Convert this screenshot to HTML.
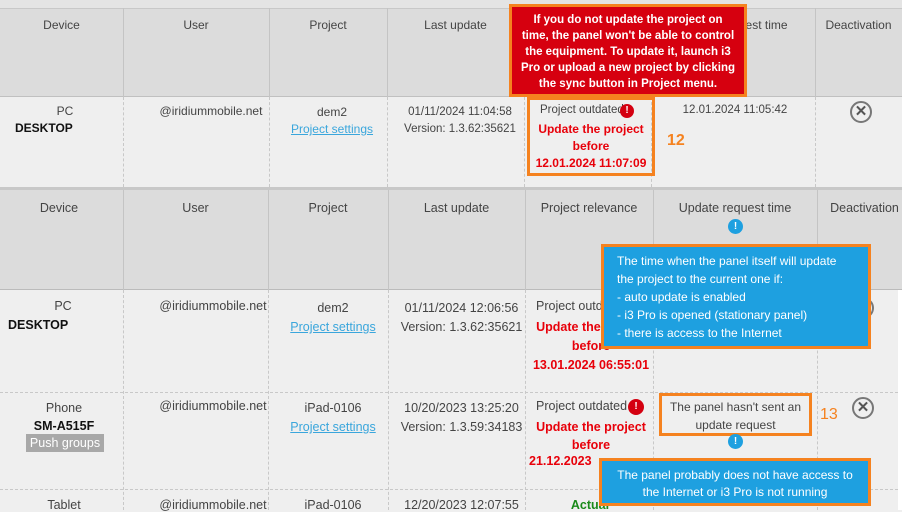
<!DOCTYPE html><html><head><style>
body{margin:0;width:902px;height:510px;overflow:hidden;background:#efefef;font-family:"Liberation Sans",sans-serif;font-size:12px;color:#444;position:relative}
div{position:absolute;box-sizing:border-box}
.h{background:#dcdcdc}
.t{text-align:center;white-space:nowrap}
.vl{width:1px;background:#c4c4c4}
.vd{width:0;border-left:1px dashed #c8c8c8}
.hd{height:0;border-top:1px dashed #c8c8c8}
.lk{color:#3aa6dc;text-decoration:underline}
.red{color:#e8000a;font-weight:bold}
.x{width:22px;height:22px;border:2px solid #777;border-radius:50%;color:#555;font-weight:bold;font-size:15px;line-height:18px;text-align:center}
.ex{width:14px;height:14px;border-radius:50%;background:#d40010;color:#fff;font-weight:bold;font-size:10px;line-height:14px;text-align:center}
.bi{width:15px;height:15px;border-radius:50%;background:#1ea0e0;color:#fff;font-weight:bold;font-size:10px;line-height:15px;text-align:center}
.tipb{background:#1ea0e0;border:3px solid #f5821f;color:#fff;font-size:12px}
.b{font-size:12.5px}
</style></head><body>
<div style="left:0;top:0;width:902px;height:8px;background:#e4e4e4"></div>
<div class="h" style="left:0;top:8px;width:902px;height:89px;border-top:1px solid #c8c8c8;border-bottom:1px solid #c0c0c0"></div>
<div class="vl" style="left:123px;top:8px;height:89px"></div>
<div class="vl" style="left:269px;top:8px;height:89px"></div>
<div class="vl" style="left:387px;top:8px;height:89px"></div>
<div class="vl" style="left:524px;top:8px;height:89px"></div>
<div class="vl" style="left:815px;top:8px;height:89px"></div>
<div class="vd" style="left:123px;top:97px;height:90px"></div>
<div class="vd" style="left:269px;top:97px;height:90px"></div>
<div class="vd" style="left:387px;top:97px;height:90px"></div>
<div class="vd" style="left:524px;top:97px;height:90px"></div>
<div class="vd" style="left:651px;top:97px;height:90px"></div>
<div class="vd" style="left:815px;top:97px;height:90px"></div>
<div class="t" style="left:0;top:18px;width:123px">Device</div>
<div class="t" style="left:123px;top:18px;width:146px">User</div>
<div class="t" style="left:269px;top:18px;width:118px">Project</div>
<div class="t" style="left:387px;top:18px;width:137px">Last update</div>
<div class="t" style="left:652px;top:18px;width:163px">Update request time</div>
<div class="t" style="left:815px;top:18px;width:87px">Deactivation</div>
<div class="t" style="left:40px;top:104px;width:50px">PC</div>
<div style="left:15px;top:121px;font-weight:bold;color:#111">DESKTOP</div>
<div class="t" style="left:123px;top:104px;width:146px;padding-left:30px">@iridiummobile.net</div>
<div class="t" style="left:269px;top:104px;width:126px;line-height:17px">dem2<br><span class="lk">Project settings</span></div>
<div class="t" style="left:387px;top:104px;width:146px;line-height:17px;font-size:11.5px">01/11/2024 11:04:58<br>Version: 1.3.62:35621</div>
<div class="t" style="left:652px;top:104px;width:166px;font-size:11.5px">12.01.2024 11:05:42</div>
<div class="x" style="left:850px;top:101px">✕</div>
<div style="left:527px;top:97px;width:128px;height:79px;border:3px solid #f5821f"></div>
<div style="left:540px;top:104px;font-size:11.5px">Project outdated</div>
<div class="ex" style="left:620px;top:104px">!</div>
<div class="t red" style="left:527px;top:121px;width:128px;line-height:17px">Update the project<br>before<br>12.01.2024 11:07:09</div>
<div style="left:667px;top:132px;color:#f5821f;font-weight:bold;font-size:16px">12</div>
<div style="left:509px;top:4px;width:238px;height:93px;background:#d6000f;border:3px solid #f5821f;color:#fff;font-weight:bold;text-align:center;line-height:16px;padding-top:5px;font-size:11.5px;white-space:nowrap">If you do not update the project on<br>time, the panel won't be able to control<br>the equipment. To update it, launch i3<br>Pro or upload a new project by clicking<br>the sync button in Project menu.</div>
<div style="left:0;top:187px;width:902px;height:3px;background:#c8c8c8"></div>
<div class="h" style="left:0;top:190px;width:902px;height:100px;border-bottom:1px solid #bbb"></div>
<div class="vl" style="left:123px;top:190px;height:100px"></div>
<div class="vl" style="left:268px;top:190px;height:100px"></div>
<div class="vl" style="left:388px;top:190px;height:100px"></div>
<div class="vl" style="left:525px;top:190px;height:100px"></div>
<div class="vl" style="left:653px;top:190px;height:100px"></div>
<div class="vl" style="left:817px;top:190px;height:100px"></div>
<div class="t b" style="left:0;top:201px;width:118px">Device</div>
<div class="t b" style="left:123px;top:201px;width:145px">User</div>
<div class="t b" style="left:268px;top:201px;width:120px">Project</div>
<div class="t b" style="left:388px;top:201px;width:137px">Last update</div>
<div class="t b" style="left:525px;top:201px;width:128px">Project relevance</div>
<div class="t b" style="left:653px;top:201px;width:164px">Update request time</div>
<div class="t b" style="left:817px;top:201px;width:95px">Deactivation</div>
<div class="bi" style="left:728px;top:219px">!</div>
<div style="left:898px;top:290px;width:4px;height:220px;background:#fff"></div>
<div class="vd" style="left:123px;top:290px;height:220px"></div>
<div class="vd" style="left:268px;top:290px;height:220px"></div>
<div class="vd" style="left:388px;top:290px;height:220px"></div>
<div class="vd" style="left:525px;top:290px;height:220px"></div>
<div class="vd" style="left:653px;top:290px;height:220px"></div>
<div class="vd" style="left:817px;top:290px;height:220px"></div>
<div class="hd" style="left:0;top:392px;width:898px"></div>
<div class="hd" style="left:0;top:489px;width:898px"></div>
<div class="t b" style="left:40px;top:299px;width:46px">PC</div>
<div class="b" style="left:8px;top:318px;font-weight:bold;color:#111">DESKTOP</div>
<div class="t b" style="left:123px;top:299px;width:150px;padding-left:30px">@iridiummobile.net</div>
<div class="t b" style="left:268px;top:299px;width:130px;line-height:19px">dem2<br><span class="lk">Project settings</span></div>
<div class="t b" style="left:393px;top:299px;width:137px;line-height:19px">01/11/2024 12:06:56<br>Version: 1.3.62:35621</div>
<div class="b" style="left:536px;top:299px">Project outdated</div>
<div class="t red b" style="left:525px;top:318px;width:132px;line-height:19px">Update the project<br>before<br>13.01.2024 06:55:01</div>
<div class="x" style="left:852px;top:297px">✕</div>
<div class="t b" style="left:0;top:399px;width:128px;line-height:18px">Phone<br><b style="color:#111">SM-A515F</b></div>
<div class="b" style="left:26px;top:434px;width:78px;height:18px;background:#a8a8a8;color:#fff;text-align:center;line-height:18px">Push groups</div>
<div class="t b" style="left:123px;top:399px;width:150px;padding-left:30px">@iridiummobile.net</div>
<div class="t b" style="left:268px;top:399px;width:130px;line-height:19px">iPad-0106<br><span class="lk">Project settings</span></div>
<div class="t b" style="left:393px;top:399px;width:137px;line-height:19px">10/20/2023 13:25:20<br>Version: 1.3.59:34183</div>
<div class="b" style="left:536px;top:399px">Project outdated</div>
<div class="ex" style="left:628px;top:399px;width:16px;height:16px;line-height:16px">!</div>
<div class="t red b" style="left:525px;top:418px;width:132px;line-height:18px">Update the project<br>before</div>
<div class="red b" style="left:529px;top:454px">21.12.2023</div>
<div style="left:659px;top:393px;width:153px;height:43px;border:3px solid #f5821f;background:#efefef;text-align:center;font-size:12px;line-height:18px;padding-top:2px">The panel hasn't sent an update request</div>
<div style="left:820px;top:406px;color:#f5821f;font-size:16px">13</div>
<div class="x" style="left:852px;top:397px">✕</div>
<div class="bi" style="left:728px;top:434px">!</div>
<div class="t b" style="left:0;top:498px;width:128px">Tablet</div>
<div class="t b" style="left:123px;top:498px;width:150px;padding-left:30px">@iridiummobile.net</div>
<div class="t b" style="left:268px;top:498px;width:130px">iPad-0106</div>
<div class="t b" style="left:393px;top:498px;width:137px">12/20/2023 12:07:55</div>
<div class="t b" style="left:525px;top:498px;width:130px;color:#1a8a1a;font-weight:bold">Actual</div>
<div class="tipb" style="left:601px;top:244px;width:270px;height:105px;line-height:18px;padding:5px 0 0 13px">The time when the panel itself will update<br>the project to the current one if:<br>- auto update is enabled<br>- i3 Pro is opened (stationary panel)<br>- there is access to the Internet</div>
<div class="tipb" style="left:599px;top:458px;width:272px;height:48px;line-height:17px;text-align:center;padding-top:6px">The panel probably does not have access to<br>the Internet or i3 Pro is not running</div>
</body></html>
